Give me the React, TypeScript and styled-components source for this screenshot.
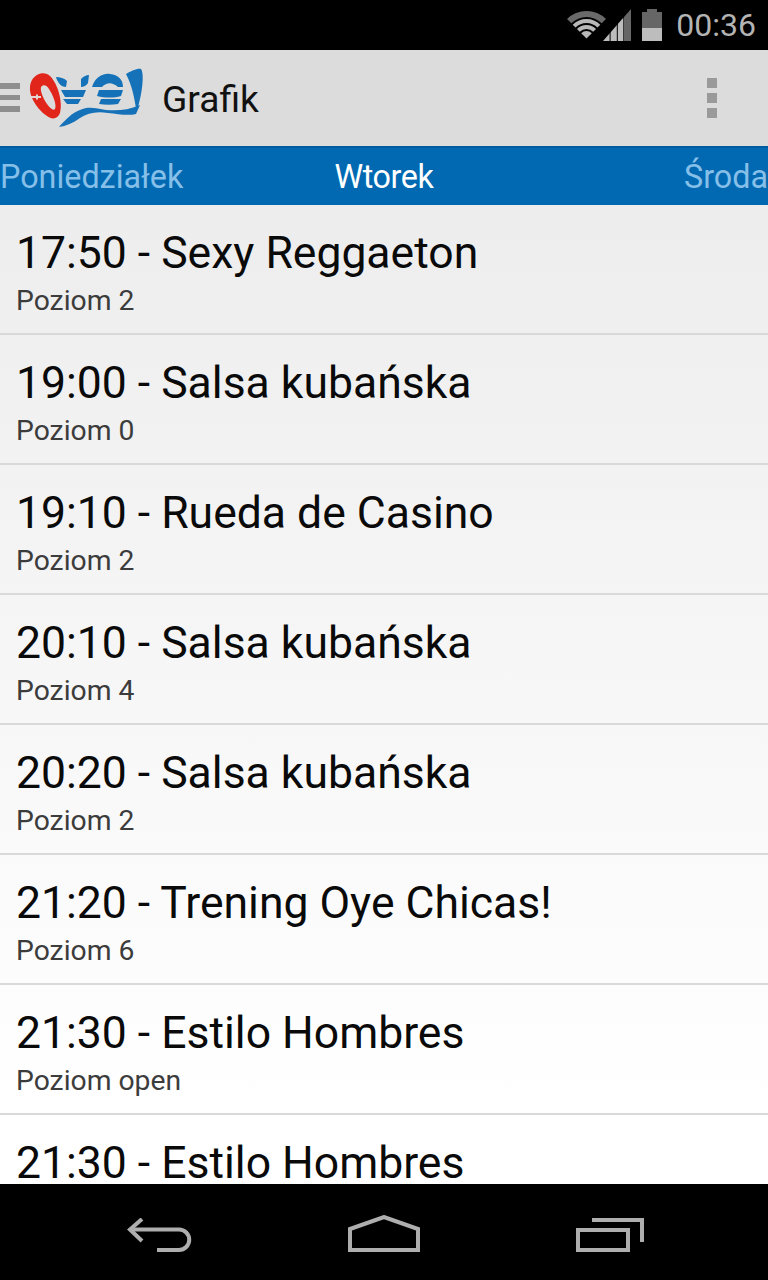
import * as React from "react";
import styled, { createGlobalStyle } from "styled-components";

type Lesson = {
  title: string;
  level: string;
};

const lessons: Lesson[] = [
  { title: "17:50 - Sexy Reggaeton", level: "Poziom 2" },
  { title: "19:00 - Salsa kubańska", level: "Poziom 0" },
  { title: "19:10 - Rueda de Casino", level: "Poziom 2" },
  { title: "20:10 - Salsa kubańska", level: "Poziom 4" },
  { title: "20:20 - Salsa kubańska", level: "Poziom 2" },
  { title: "21:20 - Trening Oye Chicas!", level: "Poziom 6" },
  { title: "21:30 - Estilo Hombres", level: "Poziom open" },
  { title: "21:30 - Estilo Hombres", level: "Poziom open" },
];

// one band of the wifi fan, between two radii, from the tip at (19.5, 27.5)
function wifiBand(outer: number, inner: number) {
  const d = 0.7071;
  const ox = outer * d;
  const ix = inner * d;
  return `M${19.5 - ox} ${27.5 - ox}A${outer} ${outer} 0 0 1 ${19.5 + ox} ${27.5 - ox}L${19.5 + ix} ${27.5 - ix}A${inner} ${inner} 0 0 0 ${19.5 - ix} ${27.5 - ix}Z`;
}

function WifiIcon() {
  return (
    <svg width="39" height="28" viewBox="0 0 39 28">
      <path d={wifiBand(27.5, 21.5)} fill="#6a6a6a" />
      <path d={wifiBand(19.5, 15.5)} fill="#b8b8b8" />
      <path d={wifiBand(13.5, 9.5)} fill="#b8b8b8" />
      <path d="M14.2 22.2A7.5 7.5 0 0 1 24.8 22.2L19.5 27.5Z" fill="#b8b8b8" />
    </svg>
  );
}

function SignalIcon() {
  return (
    <svg width="28" height="32" viewBox="0 0 28 32">
      <path d="M21 8L28 0V32H21Z" fill="#666" />
      <path d="M0 32L20.3 8.8V32Z" fill="#bdbdbd" />
      <rect x="6.6" y="8" width="1" height="24" fill="#000" />
      <rect x="13.8" y="8" width="1" height="24" fill="#000" />
    </svg>
  );
}

function BatteryIcon() {
  return (
    <svg width="20" height="32" viewBox="0 0 20 32">
      <path d="M5 0H15V3H20V19H0V3H5Z" fill="#666" />
      <rect y="19" width="20" height="13" fill="#bdbdbd" />
    </svg>
  );
}

function MenuBarsIcon() {
  return (
    <svg width="20" height="30" viewBox="0 0 20 30">
      <rect y="0" width="20" height="6" fill="#8e8e8e" />
      <rect y="12" width="20" height="5" fill="#8e8e8e" />
      <rect y="23" width="20" height="6" fill="#8e8e8e" />
    </svg>
  );
}

function OyeLogo() {
  return (
    <svg width="118" height="62" viewBox="0 0 118 62">
      <path
        fillRule="evenodd"
        d="M4 13C8 6 17 4 22 9C30 17 35 35 32 46C30 52 24 53 19 49C10 43 1 30 2 20C2 17 3 15 4 13ZM13 20C12 24 15 31 19 37C22 41 25 44 27 42C29 38 25 28 21 22C19 18 15 17 13 20Z"
        fill="#e1251b"
      />
      <path d="M2 29H8V27.5H10V29H13V31H10V32.5H8V31H3Z" fill="#e4d4d2" />
      <path d="M28 10C32 10 36 11 39 14L38 20C34 20 30 17 28 10Z" fill="#1672b8" />
      <path d="M53 12C55 10 58 8 61 8L60 16C58 19 55 20 53 20Z" fill="#1672b8" />
      <path d="M64 20C67 11 74 6 82 7C90 8 95 12 95 20L90 20C84 15 79 15 74 20Z" fill="#1672b8" />
      <path d="M33 23H58L55 30H37Z" fill="#1672b8" />
      <path d="M71 23H95L93 29C86 31 77 31 69 29Z" fill="#1672b8" />
      <path d="M35 32H53L50 37H39Z" fill="#1672b8" />
      <path d="M73 32H93L90 37C84 38 77 38 71 37Z" fill="#1672b8" />
      <path d="M98 7C103 4 110 1 113 2C116 6 115 22 110 40L108 41C106 30 104 18 98 7Z" fill="#1672b8" />
      <path d="M31 60C38 52 44 46 52 43C60 39 68 41 78 43C90 44 100 43 112 38L108 47C100 49 90 47 80 46C68 44 60 46 52 51C45 56 38 59 31 60Z" fill="#1672b8" />
    </svg>
  );
}

function BackIcon() {
  return (
    <svg width="65" height="34" viewBox="0 0 65 34" fill="none" stroke="#aeaeae" strokeWidth="4">
      <path d="M15 1L3 11.5L15 23" />
      <path d="M3 11.5H52A10.2 10.2 0 0 1 52 32H30" />
    </svg>
  );
}

function HomeIcon() {
  return (
    <svg width="72" height="37" viewBox="0 0 72 37" fill="none" stroke="#aeaeae" strokeWidth="4">
      <path d="M2 35V14L36 2L70 14V35Z" />
    </svg>
  );
}

function RecentIcon() {
  return (
    <svg width="68" height="34" viewBox="0 0 68 34" fill="none" stroke="#aeaeae" strokeWidth="4">
      <rect x="2" y="12" width="50" height="20" />
      <path d="M16 2H66V24" />
    </svg>
  );
}

export default function App() {
  return (
    <>
      <GlobalStyle />
      <Screen>
        <StatusBar>
          <WifiIcon />
          <SignalIcon />
          <BatteryIcon />
          <Clock>00:36</Clock>
        </StatusBar>
        <ActionBar>
          <MenuBarsIcon />
          <LogoWrap>
            <OyeLogo />
          </LogoWrap>
          <ScreenTitle>Grafik</ScreenTitle>
          <Overflow>
            <Dot />
            <Dot />
            <Dot />
          </Overflow>
        </ActionBar>
        <Tabs>
          <Tab $side="start">Poniedziałek</Tab>
          <Tab $active $side="center">
            Wtorek
          </Tab>
          <Tab $side="end">Środa</Tab>
        </Tabs>
        <List>
          {lessons.map((e, i) => (
            <Row key={i}>
              <Title>{e.title}</Title>
              <Level>{e.level}</Level>
            </Row>
          ))}
        </List>
        <NavBar>
          <BackIcon />
          <HomeIcon />
          <RecentIcon />
        </NavBar>
      </Screen>
    </>
  );
}

const GlobalStyle = createGlobalStyle`
  body {
    margin: 0;
    background: #000;
    font-family: Roboto, "Liberation Sans", sans-serif;
  }
`;

const Screen = styled.div`
  width: 768px;
  height: 1280px;
  display: flex;
  flex-direction: column;
  overflow: hidden;
`;

const StatusBar = styled.div`
  height: 50px;
  flex: none;
  background: #000;
  display: flex;
  align-items: center;
  justify-content: flex-end;
  padding-right: 12px;
  box-sizing: border-box;
  svg:nth-child(2) {
    margin-left: -3px;
  }
  svg:nth-child(3) {
    margin-left: 11px;
  }
`;

const Clock = styled.span`
  margin-left: 14px;
  font-size: 32px;
  line-height: 50px;
  color: #b4b4b4;
`;

const ActionBar = styled.div`
  height: 96px;
  flex: none;
  background: #dcdcdc;
  display: flex;
  align-items: center;
`;

const LogoWrap = styled.div`
  margin-left: 8px;
  display: flex;
`;

const ScreenTitle = styled.div`
  margin: 2px 0 0 16px;
  font-size: 37.2px;
  color: #111;
`;

const Overflow = styled.div`
  margin: 0 51px 0 auto;
  display: flex;
  flex-direction: column;
  gap: 5px;
`;

const Dot = styled.div`
  width: 10px;
  height: 10px;
  background: #9a9a9a;
`;

const Tabs = styled.div`
  height: 59px;
  flex: none;
  background: #0069b2;
  border-top: 2px solid #005c9e;
  box-sizing: border-box;
  display: grid;
  grid-template-columns: 1fr auto 1fr;
  align-items: center;
`;

const Tab = styled.div<{ $active?: boolean; $side: "start" | "center" | "end" }>`
  justify-self: ${(p) => p.$side};
  font-size: 32.3px;
  letter-spacing: ${(p) => (p.$active ? "-0.4px" : "0")};
  color: ${(p) => (p.$active ? "#fff" : "#86bfe8")};
`;

const List = styled.div`
  flex: 1;
  min-height: 0;
  overflow: hidden;
  background: linear-gradient(#ededed, #ffffff 92%);
`;

const Row = styled.div`
  height: 130px;
  box-sizing: border-box;
  padding: 23px 0 0 16px;
  border-bottom: 2px solid #d9d9d9;
`;

const Title = styled.div`
  font-size: 44.5px;
  line-height: 50px;
  color: #0a0a0a;
`;

const Level = styled.div`
  margin-top: 6px;
  font-size: 28.3px;
  line-height: 34px;
  color: #3c3c3c;
`;

const NavBar = styled.div`
  height: 96px;
  flex: none;
  background: #000;
  display: flex;
  align-items: flex-end;
  justify-content: space-between;
  padding: 0 124px 28px 127px;
  box-sizing: border-box;
`;
